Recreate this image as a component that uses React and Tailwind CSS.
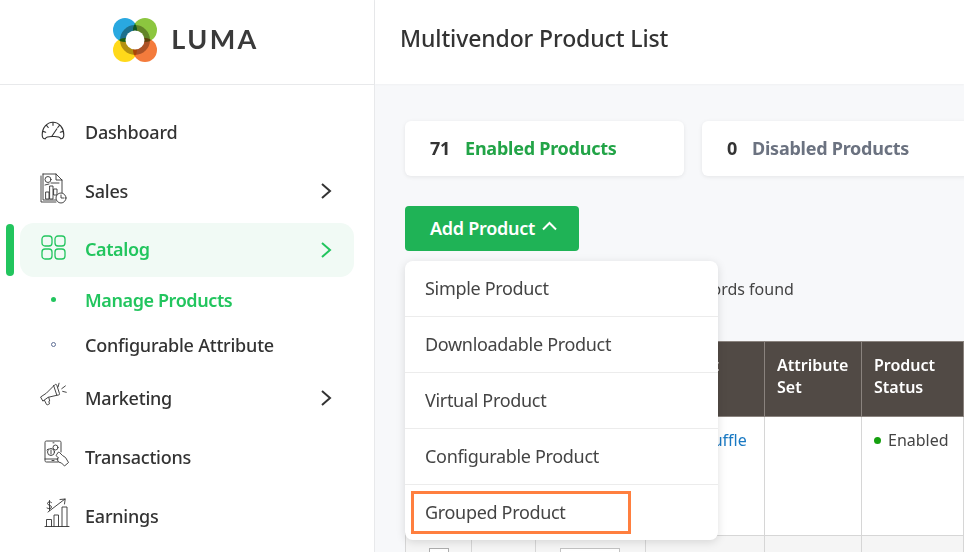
import React from "react";

const stroke = { fill: "none", stroke: "currentColor", strokeWidth: 1, strokeLinecap: "round", strokeLinejoin: "round" };

const DashboardIcon = () => (
  <svg width="26" height="19" viewBox="0 0 28 22" {...stroke} strokeWidth="1.300" className="translate-y-[1px]">
    <path d="M5 20.500H4.500C2.500 20.500 1.500 19 1.500 16 1.500 8 7 1.500 14 1.500S26.500 8 26.500 16c0 3-1 4.500-3 4.500H23" />
    <path d="M5 20.500c2-3 5-2.500 9-2.500s7-.5 9 2.500" />
    <path d="M12.500 18l6-9M14 1.500V5M6.500 5l2 2.500M21.500 5l-2 2.500M2.500 12l3 1M25.500 12l-3 1" />
  </svg>
);

const SalesIcon = () => (
  <svg width="27" height="31" viewBox="0 0 27 31" {...stroke} strokeWidth="0.9">
    <path d="M3 1h13l6 6v13M16 1v6h6M3 1v26h13" />
    <path d="M1 3v26h15" />
    <circle cx="8" cy="6.500" r="3" />
    <path d="M6 19h3v7H6zM10 13h3v13h-3zM14 16h3v6h-3zM5 12l4-1M11 10h8" />
    <circle cx="21" cy="25" r="5" fill="#fff" />
    <path d="M21 22v3h3" />
  </svg>
);

const CatalogIcon = () => (
  <svg width="25" height="25" viewBox="0 0 25 25" fill="none" stroke="currentColor" strokeWidth="1.300" className="ml-[1px]">
    <rect x="1" y="1" width="10" height="10" rx="3" />
    <rect x="14" y="1" width="10" height="10" rx="3" />
    <rect x="1" y="14" width="10" height="10" rx="3" />
    <rect x="14" y="14" width="10" height="10" rx="3" />
  </svg>
);

const MarketingIcon = () => (
  <svg width="29" height="26" viewBox="0 0 32 28" {...stroke}>
    <path d="M1 16l6-4 9-9c1-1 2-1 2.500 0l3 9.500c.3 1-.2 1.500-1.500 1.500L9 16.500 3.500 20.500z" />
    <path d="M15 3.500l3.500 10.500M5 20l2 4c.4 1 1 1 2 .5l1.500-.8-.8-2.500 1-.5-1-4" />
    <path d="M21 1l-1 4M28 4l-4 3M29 11l-4-1" />
  </svg>
);

const TransactionsIcon = () => (
  <svg width="26" height="28" viewBox="0 0 26 28" {...stroke} strokeWidth="0.9" className="ml-[4px]">
    <path d="M14 22H2.500C1.500 22 1 21.500 1 20.500V2.500C1 1.500 1.500 1 2.500 1h13c1 0 1.500.5 1.500 1.500V12" />
    <path d="M1 19h13M8 20.500h2" />
    <circle cx="7" cy="12" r="3.500" />
    <circle cx="11.500" cy="7.500" r="2.500" />
    <path d="M4 9l-1 1M9 2.800h1M7 10v4" />
    <path d="M13 14l1.500-2 1 .5 3 3 3 2 3 5-4 3.500-3-3-3-1-1.500-3 1.500-1-2-2z" />
  </svg>
);

const EarningsIcon = () => (
  <svg width="26" height="30" viewBox="0 0 26 30" {...stroke} strokeWidth="0.9" className="ml-[4px]">
    <path d="M1 28.500h24" />
    <path d="M2.500 28.500v-7h5v7M10 28.500V17h4.500v11.500M18 28.500V9h5v19.500" />
    <path d="M4 14L21 1M16 1.500l5.200-.5-.7 5" />
    <path d="M7.500 4.500C6.500 3.500 3.500 3.500 3.500 5.500s4 1.500 4 3.500-3 2-4.500 1M5.500 2.500v10" />
  </svg>
);

const Chevron = ({ className }) => (
  <svg width="12" height="18" viewBox="0 0 12 18" fill="none" stroke="currentColor" strokeWidth="2" className={className}>
    <path d="M2 2l8 7-8 7" />
  </svg>
);

const Logo = () => (
  <svg width="44" height="44" viewBox="0 0 44 44">
    <g className="isolate">
      <circle cx="12" cy="12" r="12" fill="#29a8e0" className="mix-blend-multiply" />
      <circle cx="32" cy="12" r="12" fill="#8cc63f" className="mix-blend-multiply" />
      <circle cx="12" cy="32" r="12" fill="#ffd91a" className="mix-blend-multiply" />
      <circle cx="32" cy="32" r="12" fill="#f47b3c" className="mix-blend-multiply" />
      <circle cx="22" cy="22" r="15" fill="#b3aaa0" className="mix-blend-multiply" />
    </g>
    <circle cx="22" cy="22" r="9.500" fill="#fff" />
  </svg>
);

const navItems = [
  { label: "Dashboard", icon: <DashboardIcon /> },
  { label: "Sales", icon: <SalesIcon />, arrow: true },
];

const navItemsBottom = [
  { label: "Marketing", icon: <MarketingIcon />, arrow: true },
  { label: "Transactions", icon: <TransactionsIcon /> },
  { label: "Earnings", icon: <EarningsIcon /> },
];

const NavRow = ({ item }) => (
  <div className="mx-5 mb-[5px] flex h-[54px] items-center pl-5 pr-[22px] text-[#333]">
    <div className="flex w-[45px] shrink-0 items-center pb-1.5">{item.icon}</div>
    <span className="text-lg font-medium tracking-[-0.22px]">{item.label}</span>
    {item.arrow && <Chevron className="ml-auto" />}
  </div>
);

const Sidebar = () => (
  <aside className="flex w-[375px] shrink-0 flex-col border-r border-[#e8e9eb] bg-white">
    <div className="flex h-[85px] items-center justify-center gap-[14px] border-b border-[#e8e9eb] pb-[5px] pr-0.5">
      <Logo />
      <span className="font-['Lato'] text-[27px] font-bold tracking-[0.09em] text-[#3a3a3a]">LUMA</span>
    </div>
    <nav className="relative pt-5">
      {navItems.map((item) => (
        <NavRow key={item.label} item={item} />
      ))}
      <div className="absolute left-[6px] top-[139px] h-[52px] w-2 rounded-full bg-[#22c55e]" />
      <div className="mx-5 flex h-[54px] items-center rounded-[14px] bg-[#f1faf5] pl-5 pr-[22px] text-[#22c55e]">
        <div className="flex w-[45px] shrink-0 items-center pb-1.5">
          <CatalogIcon />
        </div>
        <span className="pb-0.5 text-lg font-semibold tracking-[-0.4px]">Catalog</span>
        <Chevron className="ml-auto" />
      </div>
      <div className="flex h-[94px] flex-col pb-1 pl-[51px]">
        <div className="flex h-[45px] items-center text-lg font-semibold tracking-[-0.4px] text-[#22c55e]">
          <span className="mr-[29px] h-[5px] w-[5px] rounded-full bg-[#22c55e]" />
          Manage Products
        </div>
        <div className="flex h-[45px] items-center text-lg font-medium tracking-[-0.22px] text-[#333]">
          <span className="mr-[29px] h-[5px] w-[5px] rounded-full border border-[#5f6f96]" />
          Configurable Attribute
        </div>
      </div>
      {navItemsBottom.map((item) => (
        <NavRow key={item.label} item={item} />
      ))}
    </nav>
  </aside>
);

const StatCard = ({ count, label, color }) => (
  <div className="flex h-[55px] w-[279px] shrink-0 items-center gap-[15px] rounded-md bg-white pb-0.5 pl-[25px] text-lg font-bold tracking-[-0.25px] shadow-[0_1px_4px_rgba(0,0,0,0.08)]">
    <span className="text-[#333]">{count}</span>
    <span className={color}>{label}</span>
  </div>
);

const menuItems = ["Simple Product", "Downloadable Product", "Virtual Product", "Configurable Product"];

const AddMenu = () => (
  <div className="absolute left-0 top-[55px] z-10 w-[313px] rounded-lg bg-white text-lg tracking-[-0.32px] text-[#444] shadow-[0_2px_10px_rgba(0,0,0,0.13)]">
    {menuItems.map((label) => (
      <div key={label} className="flex h-14 items-center border-b border-[#ececec] pb-0.5 pl-5">
        {label}
      </div>
    ))}
    <div className="flex h-[55px] items-center px-[6px]">
      <div className="flex h-[43px] w-[220px] items-center border-[3px] border-[#ff7f3f] pb-0.5 pl-[11px]">Grouped Product</div>
    </div>
  </div>
);

const thClass = "border border-[#8a837e] px-3 pb-[16px] pt-3 text-left align-top text-base font-semibold leading-[22px]";
const tdClass = "border border-[#d6d6d6] px-3 pb-3 pt-[11px] align-top text-base";

const ProductTable = () => (
  <table className="w-[559px] table-fixed border-collapse">
    <colgroup>
      <col className="w-[66px]" />
      <col className="w-16" />
      <col className="w-[110px]" />
      <col className="w-[119px]" />
      <col className="w-[97px]" />
      <col className="w-[102px]" />
    </colgroup>
    <thead>
      <tr className="h-[75px] bg-[#514a45] text-white">
        <th className={thClass}></th>
        <th className={thClass}>ID</th>
        <th className={thClass}>Thumbnail</th>
        <th className={thClass}>Product Name</th>
        <th className={thClass}>Attribute Set</th>
        <th className={thClass}>Product Status</th>
      </tr>
    </thead>
    <tbody>
      <tr className="h-[119px] bg-white">
        <td className={tdClass}></td>
        <td className={tdClass}></td>
        <td className={tdClass}></td>
        <td className={`${tdClass} whitespace-nowrap text-[#1979c3]`}>Dark Truffle</td>
        <td className={tdClass}></td>
        <td className={`${tdClass} whitespace-nowrap text-[#444]`}>
          <span className="mr-[7px] inline-block h-[7px] w-[7px] -translate-y-0.5 rounded-full bg-[#15a00f]" />
          Enabled
        </td>
      </tr>
      <tr className="h-[40px] bg-[#f5f5f5]">
        <td className={tdClass}>
          <div className="ml-[11px] mt-[1px] h-5 w-5 border border-[#adadad] bg-white" />
        </td>
        <td className={tdClass}></td>
        <td className={tdClass}>
          <div className="ml-3 mt-[1px] h-8 w-[60px] border border-[#c2c2c2] bg-white" />
        </td>
        <td className={tdClass}></td>
        <td className={tdClass}></td>
        <td className={tdClass}></td>
      </tr>
    </tbody>
  </table>
);

const App = () => (
  <div className="flex h-[552px] w-[964px] overflow-hidden bg-[#f7f8fa] font-['Noto_Sans',sans-serif]">
    <Sidebar />
    <main className="min-w-0 flex-1">
      <header className="flex h-[84px] items-center bg-white pb-2 pl-[25px] shadow-[0_1px_2px_rgba(0,0,0,0.03)]">
        <h1 className="text-[23px] font-medium tracking-[-0.12px] text-[#333]">Multivendor Product List</h1>
      </header>
      <div className="pl-[30px] pt-[37px]">
        <div className="flex gap-[18px]">
          <StatCard count="71" label="Enabled Products" color="text-[#22a447]" />
          <StatCard count="0" label="Disabled Products" color="text-[#6b7280]" />
        </div>
        <div className="relative mt-[30px] w-[313px]">
          <button className="flex h-[45px] w-[174px] items-center gap-[7px] rounded bg-[#1fb356] pb-0.5 pl-[25px] text-lg font-semibold tracking-[-0.27px] text-white">
            Add Product
            <svg width="15" height="10" viewBox="0 0 15 10" fill="none" stroke="currentColor" strokeWidth="2" className="-translate-y-0.5">
              <path d="M1 8.500l6.500-6.500L14 8.500" />
            </svg>
          </button>
          <AddMenu />
        </div>
        <div className="flex h-[90px] items-start pl-[261px] pt-[26px] text-base text-[#444]">
          <span className="whitespace-nowrap">71 records found</span>
        </div>
        <ProductTable />
      </div>
    </main>
  </div>
);

export default App;
